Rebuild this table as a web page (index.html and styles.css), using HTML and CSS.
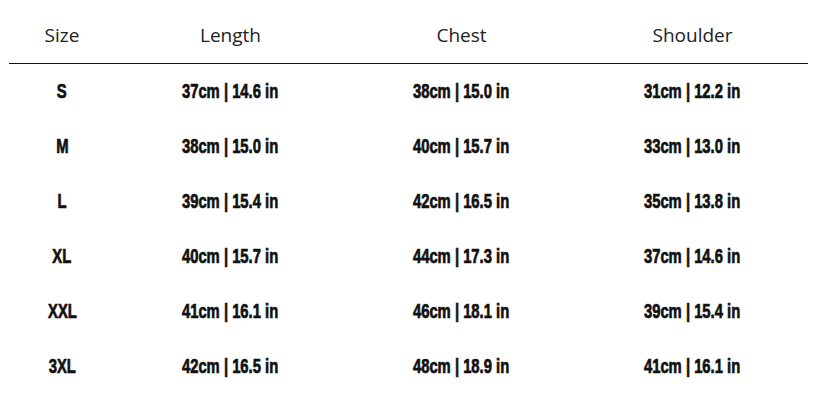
FILE: index.html
```html
<!DOCTYPE html>
<html>
<head>
<meta charset="utf-8">
<link rel="stylesheet" href="styles.css">
</head>
<body>
<div class="chart">
  <div class="row head">
    <div class="cell">Size</div>
    <div class="cell">Length</div>
    <div class="cell">Chest</div>
    <div class="cell">Shoulder</div>
  </div>
  <div class="row">
    <div class="cell"><span>S</span></div>
    <div class="cell"><span>37cm | 14.6 in</span></div>
    <div class="cell"><span>38cm | 15.0 in</span></div>
    <div class="cell"><span>31cm | 12.2 in</span></div>
  </div>
  <div class="row">
    <div class="cell"><span>M</span></div>
    <div class="cell"><span>38cm | 15.0 in</span></div>
    <div class="cell"><span>40cm | 15.7 in</span></div>
    <div class="cell"><span>33cm | 13.0 in</span></div>
  </div>
  <div class="row">
    <div class="cell"><span>L</span></div>
    <div class="cell"><span>39cm | 15.4 in</span></div>
    <div class="cell"><span>42cm | 16.5 in</span></div>
    <div class="cell"><span>35cm | 13.8 in</span></div>
  </div>
  <div class="row">
    <div class="cell"><span>XL</span></div>
    <div class="cell"><span>40cm | 15.7 in</span></div>
    <div class="cell"><span>44cm | 17.3 in</span></div>
    <div class="cell"><span>37cm | 14.6 in</span></div>
  </div>
  <div class="row">
    <div class="cell"><span>XXL</span></div>
    <div class="cell"><span>41cm | 16.1 in</span></div>
    <div class="cell"><span>46cm | 18.1 in</span></div>
    <div class="cell"><span>39cm | 15.4 in</span></div>
  </div>
  <div class="row">
    <div class="cell"><span>3XL</span></div>
    <div class="cell"><span>42cm | 16.5 in</span></div>
    <div class="cell"><span>48cm | 18.9 in</span></div>
    <div class="cell"><span>41cm | 16.1 in</span></div>
  </div>
</div>
</body>
</html>
```
FILE: styles.css
```css
html, body {
  margin: 0;
  padding: 0;
  background: #ffffff;
}
.chart {
  margin-left: 9px;
  width: 799px;
}
.row {
  display: grid;
  grid-template-columns: 106px 231px 231px 231px;
  height: 55px;
  align-items: center;
}
.row.head {
  height: 56px;
  padding-top: 7px;
  border-bottom: 1px solid #111;
}
.cell {
  text-align: center;
}
.head .cell {
  font-family: "Open Sans", "Liberation Sans", sans-serif;
  font-size: 19px;
  color: #222;
}
.row:not(.head) .cell span {
  display: inline-block;
  font-family: "Liberation Sans", sans-serif;
  font-weight: bold;
  font-size: 20px;
  color: #111;
  -webkit-text-stroke: 0.7px #111;
  transform: scaleX(0.74);
}
```
